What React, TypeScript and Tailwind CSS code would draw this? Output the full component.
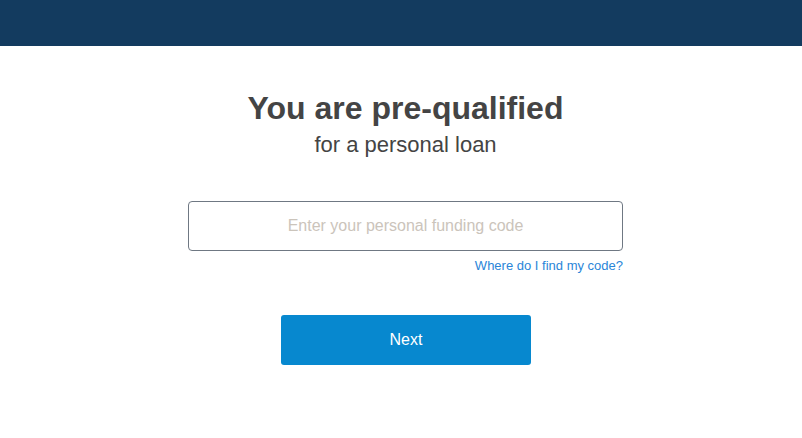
export default function App() {
  return (
    <div className="min-h-[438px] bg-white font-['Liberation_Sans',Arial,sans-serif]">
      <header className="h-[46px] bg-[#133b5f]" />

      <main className="flex flex-col items-center pl-[9px]">
        <h1 className="mt-[42px] text-[32px] font-bold leading-[40px] text-[#444444]">
          You are pre-qualified
        </h1>
        <p className="mt-[3px] text-[22px] leading-[28px] text-[#444444]">for a personal loan</p>

        <div className="mt-[42px] flex w-[435px] flex-col items-end">
          <input
            type="text"
            placeholder="Enter your personal funding code"
            className="h-[50px] w-full rounded-[4px] border border-[#6f7883] bg-white px-3 text-center text-[16px] text-[#444444] outline-none placeholder:text-[#cbc4bb]"
          />
          <a href="#" className="mt-[7px] text-[13px] leading-[16px] text-[#2a85d8]">
            Where do I find my code?
          </a>
        </div>

        <button className="ml-[1px] mt-[41px] h-[50px] w-[250px] rounded-[3px] bg-[#0788cf] text-[16px] text-white">
          Next
        </button>
      </main>
    </div>
  )
}
